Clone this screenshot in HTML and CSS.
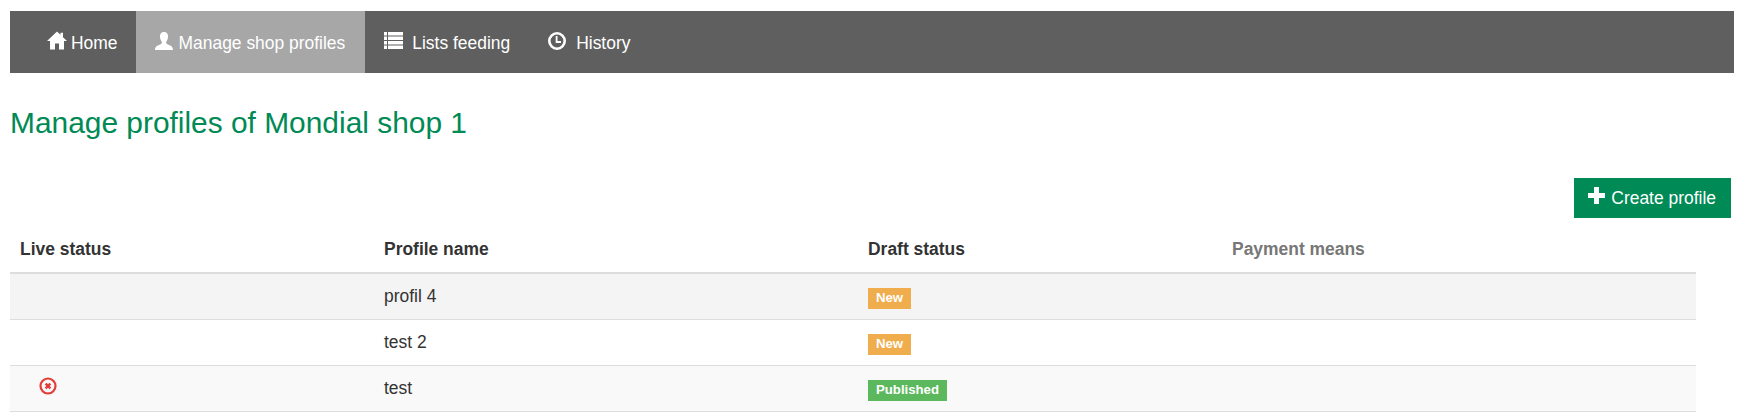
FILE: index.html
```html
<!DOCTYPE html>
<html lang="en">
<head>
<meta charset="utf-8">
<title>Manage profiles</title>
<link rel="stylesheet" href="styles.css">
</head>
<body>
<nav class="navbar">
  <a class="nav-item nav-home" href="#"><svg class="ico ico-home" viewBox="0 0 20 18"><path d="M10 0 L13.5 3.3 V1.2 H16 V5.7 L20 9.5 H17 V18 H12 V12 H8 V18 H3 V9.5 H0 Z" fill="#fff"/></svg>Home</a>
  <a class="nav-item nav-active" href="#"><svg class="ico ico-user" viewBox="0 0 18 18"><path d="M9 0 C12 0 13.3 2 13 5 C12.8 7.5 11.8 9 11 10 C11 11.5 12 12.3 14 13 C16 13.8 18 14.6 18 18 H0 C0 14.6 2 13.8 4 13 C6 12.3 7 11.5 7 10 C6.2 9 5.2 7.5 5 5 C4.7 2 6 0 9 0 Z" fill="#fff"/></svg>Manage shop profiles</a>
  <a class="nav-item" href="#"><svg class="ico ico-list" viewBox="0 0 19 17"><path d="M0 0 H3 V3.4 H0 Z M4 0 H19 V3.4 H4 Z M0 4.5 H3 V7.9 H0 Z M4 4.5 H19 V7.9 H4 Z M0 9 H3 V12.4 H0 Z M4 9 H19 V12.4 H4 Z M0 13.5 H3 V16.9 H0 Z M4 13.5 H19 V16.9 H4 Z" fill="#fff"/></svg>Lists feeding</a>
  <a class="nav-item" href="#"><svg class="ico ico-clock" viewBox="0 0 18 18"><circle cx="9" cy="9" r="7.7" fill="none" stroke="#fff" stroke-width="2.6"/><path d="M8.6 4 V10 H13" fill="none" stroke="#fff" stroke-width="1.8"/></svg>History</a>
</nav>

<h1 class="title">Manage profiles of Mondial shop 1</h1>

<div class="actions">
  <a class="btn-create" href="#"><svg class="ico-plus" viewBox="0 0 17 17"><path d="M6 0 H11 V6 H17 V11 H11 V17 H6 V11 H0 V6 H6 Z" fill="#fff"/></svg>Create profile</a>
</div>

<table class="profiles">
  <colgroup>
    <col class="col-live"><col class="col-name"><col class="col-draft"><col class="col-pay">
  </colgroup>
  <thead>
    <tr><th>Live status</th><th>Profile name</th><th>Draft status</th><th class="muted">Payment means</th></tr>
  </thead>
  <tbody>
    <tr class="row-hover"><td></td><td>profil 4</td><td><span class="label label-new">New</span></td><td></td></tr>
    <tr><td></td><td>test 2</td><td><span class="label label-new">New</span></td><td></td></tr>
    <tr class="row-odd"><td><svg class="ico-off" viewBox="0 0 18 18"><circle cx="9" cy="9" r="7.5" fill="none" stroke="#e53c3a" stroke-width="2.2"/><path d="M6.6 6.6 L11.4 11.4 M11.4 6.6 L6.6 11.4" stroke="#e53c3a" stroke-width="2.4"/></svg></td><td>test</td><td><span class="label label-pub">Published</span></td><td></td></tr>
  </tbody>
</table>
</body>
</html>
```
FILE: styles.css
```css
* { box-sizing: border-box; }
body {
  margin: 11px 8px 0 10px;
  font-family: "Liberation Sans", Arial, sans-serif;
  font-size: 16px;
  line-height: 1.42857;
  color: #333;
  background: #fff;
}
a { text-decoration: none; }

.navbar {
  display: flex;
  height: 62px;
  padding-left: 18px;
  background: #5f5f5f;
}
.nav-item {
  display: flex;
  align-items: center;
  padding: 2px 19px 0;
  color: #fff;
  font-size: 17.45px;
  white-space: nowrap;
}
.nav-home { padding-right: 18px; }
.nav-active { padding-right: 20px; background: #a7a7a7; }
.ico { flex: none; fill: #fff; margin-bottom: 5px; }
.ico-home { width: 20px; height: 19px; margin-right: 4px; }
.ico-user { width: 18px; height: 18px; margin-right: 6px; }
.ico-list { width: 19px; height: 17px; margin-right: 9px; }
.ico-clock { width: 18px; height: 18px; margin-right: 10px; }

.title {
  margin: 33px 0 0;
  font-size: 29.9px;
  font-weight: 400;
  line-height: 33px;
  color: #008a55;
}

.actions {
  display: flex;
  justify-content: flex-end;
  margin-top: 39px;
  padding-right: 3px;
}
.btn-create {
  display: flex;
  align-items: center;
  height: 40px;
  padding: 0 15px 0 14px;
  background: #008a55;
  color: #fff;
  font-size: 17.45px;
}
.ico-plus { width: 17px; height: 17px; margin: 0 6px 5px 0; }

.profiles {
  width: 1686px;
  table-layout: fixed;
  border-collapse: collapse;
  font-size: 17.45px;
}
.col-live { width: 364px; }
.col-name { width: 484px; }
.col-draft { width: 364px; }
.col-pay { width: 474px; }

.profiles th {
  height: 55px;
  padding: 9px 10px 0;
  text-align: left;
  font-weight: 700;
  color: #333;
  border-bottom: 2px solid #ddd;
}
.profiles th.muted { color: #777; }
.profiles td {
  height: 46px;
  padding: 0 10px;
  border-bottom: 1px solid #ddd;
  vertical-align: middle;
}
.row-hover { background: #f4f4f4; }
.row-odd { background: #f9f9f9; }

.label {
  display: inline-block;
  height: 21px;
  margin-top: 3px;
  padding: 0 8px;
  font-size: 13.2px;
  font-weight: 700;
  line-height: 20px;
  color: #fff;
  vertical-align: middle;
}
.label-new { background: #f0ad4e; }
.label-pub { background: #5cb85c; }
.ico-off { display: block; width: 18px; height: 18px; margin: -4px 0 0 18.5px; }
```
